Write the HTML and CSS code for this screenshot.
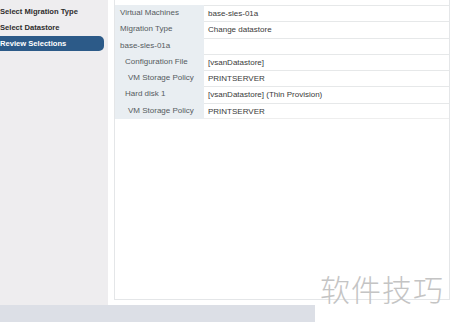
FILE: index.html
```html
<!DOCTYPE html>
<html lang="en">
  <head>
    <meta charset="UTF-8" />
    <title>Migrate - Review Selections</title>
    <link rel="stylesheet" href="styles.css">
  </head>
  <body>
    <div class="wizard">
      <nav class="steps">
        <div class="step">Select Migration Type</div>
        <div class="step">Select Datastore</div>
        <div class="step valgt">Review Selections</div>
      </nav>

      <main class="content">
        <div class="review">
          <div class="row">
            <div class="label">Virtual Machines</div>
            <div class="value">base-sles-01a</div>
          </div>
          <div class="row">
            <div class="label">Migration Type</div>
            <div class="value">Change datastore</div>
          </div>
          <div class="row">
            <div class="label">base-sles-01a</div>
            <div class="value"></div>
          </div>
          <div class="row">
            <div class="label sub">Configuration File</div>
            <div class="value">[vsanDatastore]</div>
          </div>
          <div class="row">
            <div class="label subsub">VM Storage Policy</div>
            <div class="value">PRINTSERVER</div>
          </div>
          <div class="row">
            <div class="label sub">Hard disk 1</div>
            <div class="value">[vsanDatastore] (Thin Provision)</div>
          </div>
          <div class="row last">
            <div class="label subsub">VM Storage Policy</div>
            <div class="value">PRINTSERVER</div>
          </div>
        </div>
      </main>
    </div>

    <footer class="bottombar"></footer>

    <div class="watermark">软件技巧</div>
  </body>
</html>
```

FILE: styles.css
```css
body {
  margin: 0;
  width: 450px;
  height: 322px;
  overflow: hidden;
  background-color: #ffffff;
  font-family: "Liberation Sans", Arial, sans-serif;
  position: relative;
}

.wizard {
  display: flex;
  height: 305px;
}

/* venstre menu ------------------------------ */

.steps {
  width: 108px;
  flex-shrink: 0;
  background-color: #eeedef;
  padding-top: 3.5px;
  box-sizing: border-box;
}

.step {
  height: 15px;
  line-height: 15px;
  margin-bottom: 1px;
  padding-left: 0;
  font-size: 7.6px;
  font-weight: bold;
  color: #2e2e2e;
  width: 104px;
}

.step.valgt {
  background-color: #2c5a88;
  color: #ffffff;
  border-radius: 0 5px 5px 0;
}

/* indhold ------------------------------ */

.content {
  flex: 1;
  padding-left: 6px;
  padding-bottom: 5px;
  box-sizing: border-box;
}

.review {
  height: 100%;
  border: 1px solid #e4e6e8;
  border-top: none;
  box-sizing: border-box;
  padding-top: 5px;
}

.row {
  display: flex;
  height: 16.3px;
  font-size: 8px;
}

.label {
  width: 84px;
  flex-shrink: 0;
  background-color: #e9eef2;
  color: #555b60;
  padding-left: 5px;
  line-height: 16.3px;
  white-space: nowrap;
}

.label.sub {
  padding-left: 10px;
  width: 79px;
}

.label.subsub {
  padding-left: 13px;
  width: 76px;
}

.value {
  flex: 1;
  padding-left: 4px;
  color: #3a3a3a;
  line-height: 15.3px;
  border-top: 1px solid #e6e8e9;
  white-space: nowrap;
}

.row.last .value {
  border-bottom: 1px solid #eeeeee;
}

.bottombar {
  width: 315px;
  height: 17px;
  background-color: #dcdfe6;
}

.watermark {
  position: absolute;
  left: 320px;
  top: 270px;
  font-family: "Noto Sans CJK SC", sans-serif;
  font-weight: 300;
  font-size: 30px;
  line-height: 36px;
  color: #c4c4c4;
  letter-spacing: 1px;
}
```
